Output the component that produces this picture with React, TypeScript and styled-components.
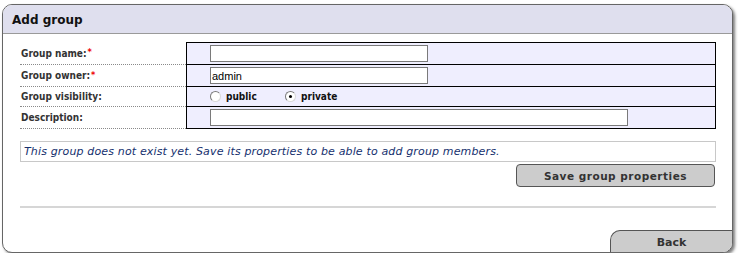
import React from "react";
import styled, { createGlobalStyle } from "styled-components";

const Global = createGlobalStyle`
  html, body { margin: 0; padding: 0; background: #ffffff; }
  body { font-family: "DejaVu Sans", Verdana, sans-serif; }
  * { box-sizing: border-box; }
`;

const Panel = styled.div`
  margin: 4px 0 0 2px;
  width: 731px;
  height: 249px;
  border: 1px solid #666666;
  border-radius: 10px;
  overflow: hidden;
  display: flex;
  flex-direction: column;
  box-shadow: 2px 2px 3px rgba(0, 0, 0, 0.5);
  background: #ffffff;
`;

const Header = styled.div`
  height: 29px;
  flex: none;
  background: #dfdfee;
  border-bottom: 1px solid #9a9a9a;
  display: flex;
  align-items: center;
  padding-left: 9px;
`;

const Title = styled.h1`
  margin: 0;
  font-family: "DejaVu Sans", Verdana, sans-serif;
  font-weight: bold;
  font-size: 12px;
  color: #111111;
  padding-top: 1px;
`;

const Body = styled.div`
  padding: 8px 0 0 17px;
  width: 713px;
  display: flex;
  flex-direction: column;
`;

const FormGrid = styled.div`
  display: grid;
  grid-template-columns: 166px 530px;
  grid-template-rows: 23px 22px 20px 22px;
`;

const Label = styled.div`
  display: flex;
  align-items: center;
  border-bottom: 1px dotted #8a8a8a;
  font-family: "DejaVu Sans Condensed", "DejaVu Sans", Verdana, sans-serif;
  font-weight: bold;
  font-size: 10px;
  color: #333333;
  padding-left: 1px;
`;

const Required = styled.sup`
  color: #ee0000;
  font-size: 9px;
  position: relative;
  top: -1px;
  margin-left: 1px;
  line-height: 0;
`;

const Value = styled.div<{ $first?: boolean }>`
  display: flex;
  align-items: center;
  background: #efeefe;
  border-left: 1px solid #000000;
  border-right: 1px solid #000000;
  border-bottom: 1px solid #000000;
  border-top: ${(p) => (p.$first ? "1px solid #000000" : "none")};
  padding-left: 23px;
`;

const TextInput = styled.input<{ $w: number }>`
  width: ${(p) => p.$w}px;
  height: 17px;
  border: 1px solid #7a7a7a;
  background: #ffffff;
  padding: 0 1px;
  margin: 0;
  font-family: "Liberation Sans", Arial, sans-serif;
  font-size: 11px;
  color: #000000;
  outline: none;
`;

const RadioOption = styled.label<{ $w: number }>`
  display: flex;
  align-items: center;
  width: ${(p) => p.$w}px;
  font-family: "DejaVu Sans Condensed", "DejaVu Sans", Verdana, sans-serif;
  font-weight: bold;
  font-size: 10px;
  color: #111111;
`;

const RadioDot = styled.span<{ $checked?: boolean }>`
  position: relative;
  width: 11px;
  height: 11px;
  border-radius: 50%;
  border: 1px solid;
  border-color: #7a7a7a #d8d8d8 #d8d8d8 #7a7a7a;
  background: #ffffff;
  margin: 0 5px 0 0;
  flex: none;
  &::after {
    content: "";
    display: ${(p) => (p.$checked ? "block" : "none")};
    position: absolute;
    left: 3px;
    top: 3px;
    width: 3px;
    height: 3px;
    border-radius: 50%;
    background: #000000;
  }
`;

const Notice = styled.div`
  margin-top: 12px;
  width: 696px;
  height: 21px;
  border: 1px solid #c8c8c8;
  display: flex;
  align-items: center;
  padding-left: 3px;
  font-family: "DejaVu Sans", Verdana, sans-serif;
  font-style: italic;
  font-size: 11px;
  letter-spacing: 0.15px;
  color: #15306e;
`;

const ButtonRow = styled.div`
  display: flex;
  justify-content: flex-end;
  width: 695px;
  margin-top: 2px;
`;

const SaveButton = styled.button`
  width: 199px;
  height: 23px;
  border: 1px solid #555555;
  border-radius: 4px;
  background: #cccccc;
  font-family: "DejaVu Sans", Verdana, sans-serif;
  font-weight: bold;
  font-size: 10.5px;
  color: #333333;
  letter-spacing: 0.5px;
  padding: 0;
  cursor: pointer;
`;

const Divider = styled.div`
  margin-top: 19px;
  width: 696px;
  height: 2px;
  background: #d6d6d6;
`;

const Footer = styled.div`
  margin-top: auto;
  display: flex;
  justify-content: flex-end;
`;

const BackTab = styled.button`
  width: 122px;
  height: 22px;
  background: #cccccc;
  border: none;
  border-top: 1px solid #555555;
  border-left: 1px solid #555555;
  border-top-left-radius: 10px;
  font-family: "DejaVu Sans", Verdana, sans-serif;
  font-weight: bold;
  font-size: 11px;
  color: #333333;
  padding: 1px 0 0 0;
  cursor: pointer;
`;

export default function App() {
  return (
    <>
      <Global />
      <Panel>
        <Header>
          <Title>Add group</Title>
        </Header>
        <Body>
          <FormGrid>
            <Label>
              Group name:<Required>*</Required>
            </Label>
            <Value $first>
              <TextInput $w={218} defaultValue="" />
            </Value>
            <Label>
              Group owner:<Required>*</Required>
            </Label>
            <Value>
              <TextInput $w={218} defaultValue="admin" />
            </Value>
            <Label>Group visibility:</Label>
            <Value>
              <RadioOption $w={75}>
                <RadioDot />
                public
              </RadioOption>
              <RadioOption $w={80}>
                <RadioDot $checked />
                private
              </RadioOption>
            </Value>
            <Label>Description:</Label>
            <Value>
              <TextInput $w={418} defaultValue="" />
            </Value>
          </FormGrid>
          <Notice>
            This group does not exist yet. Save its properties to be able to add group members.
          </Notice>
          <ButtonRow>
            <SaveButton>Save group properties</SaveButton>
          </ButtonRow>
          <Divider />
        </Body>
        <Footer>
          <BackTab>Back</BackTab>
        </Footer>
      </Panel>
    </>
  );
}
